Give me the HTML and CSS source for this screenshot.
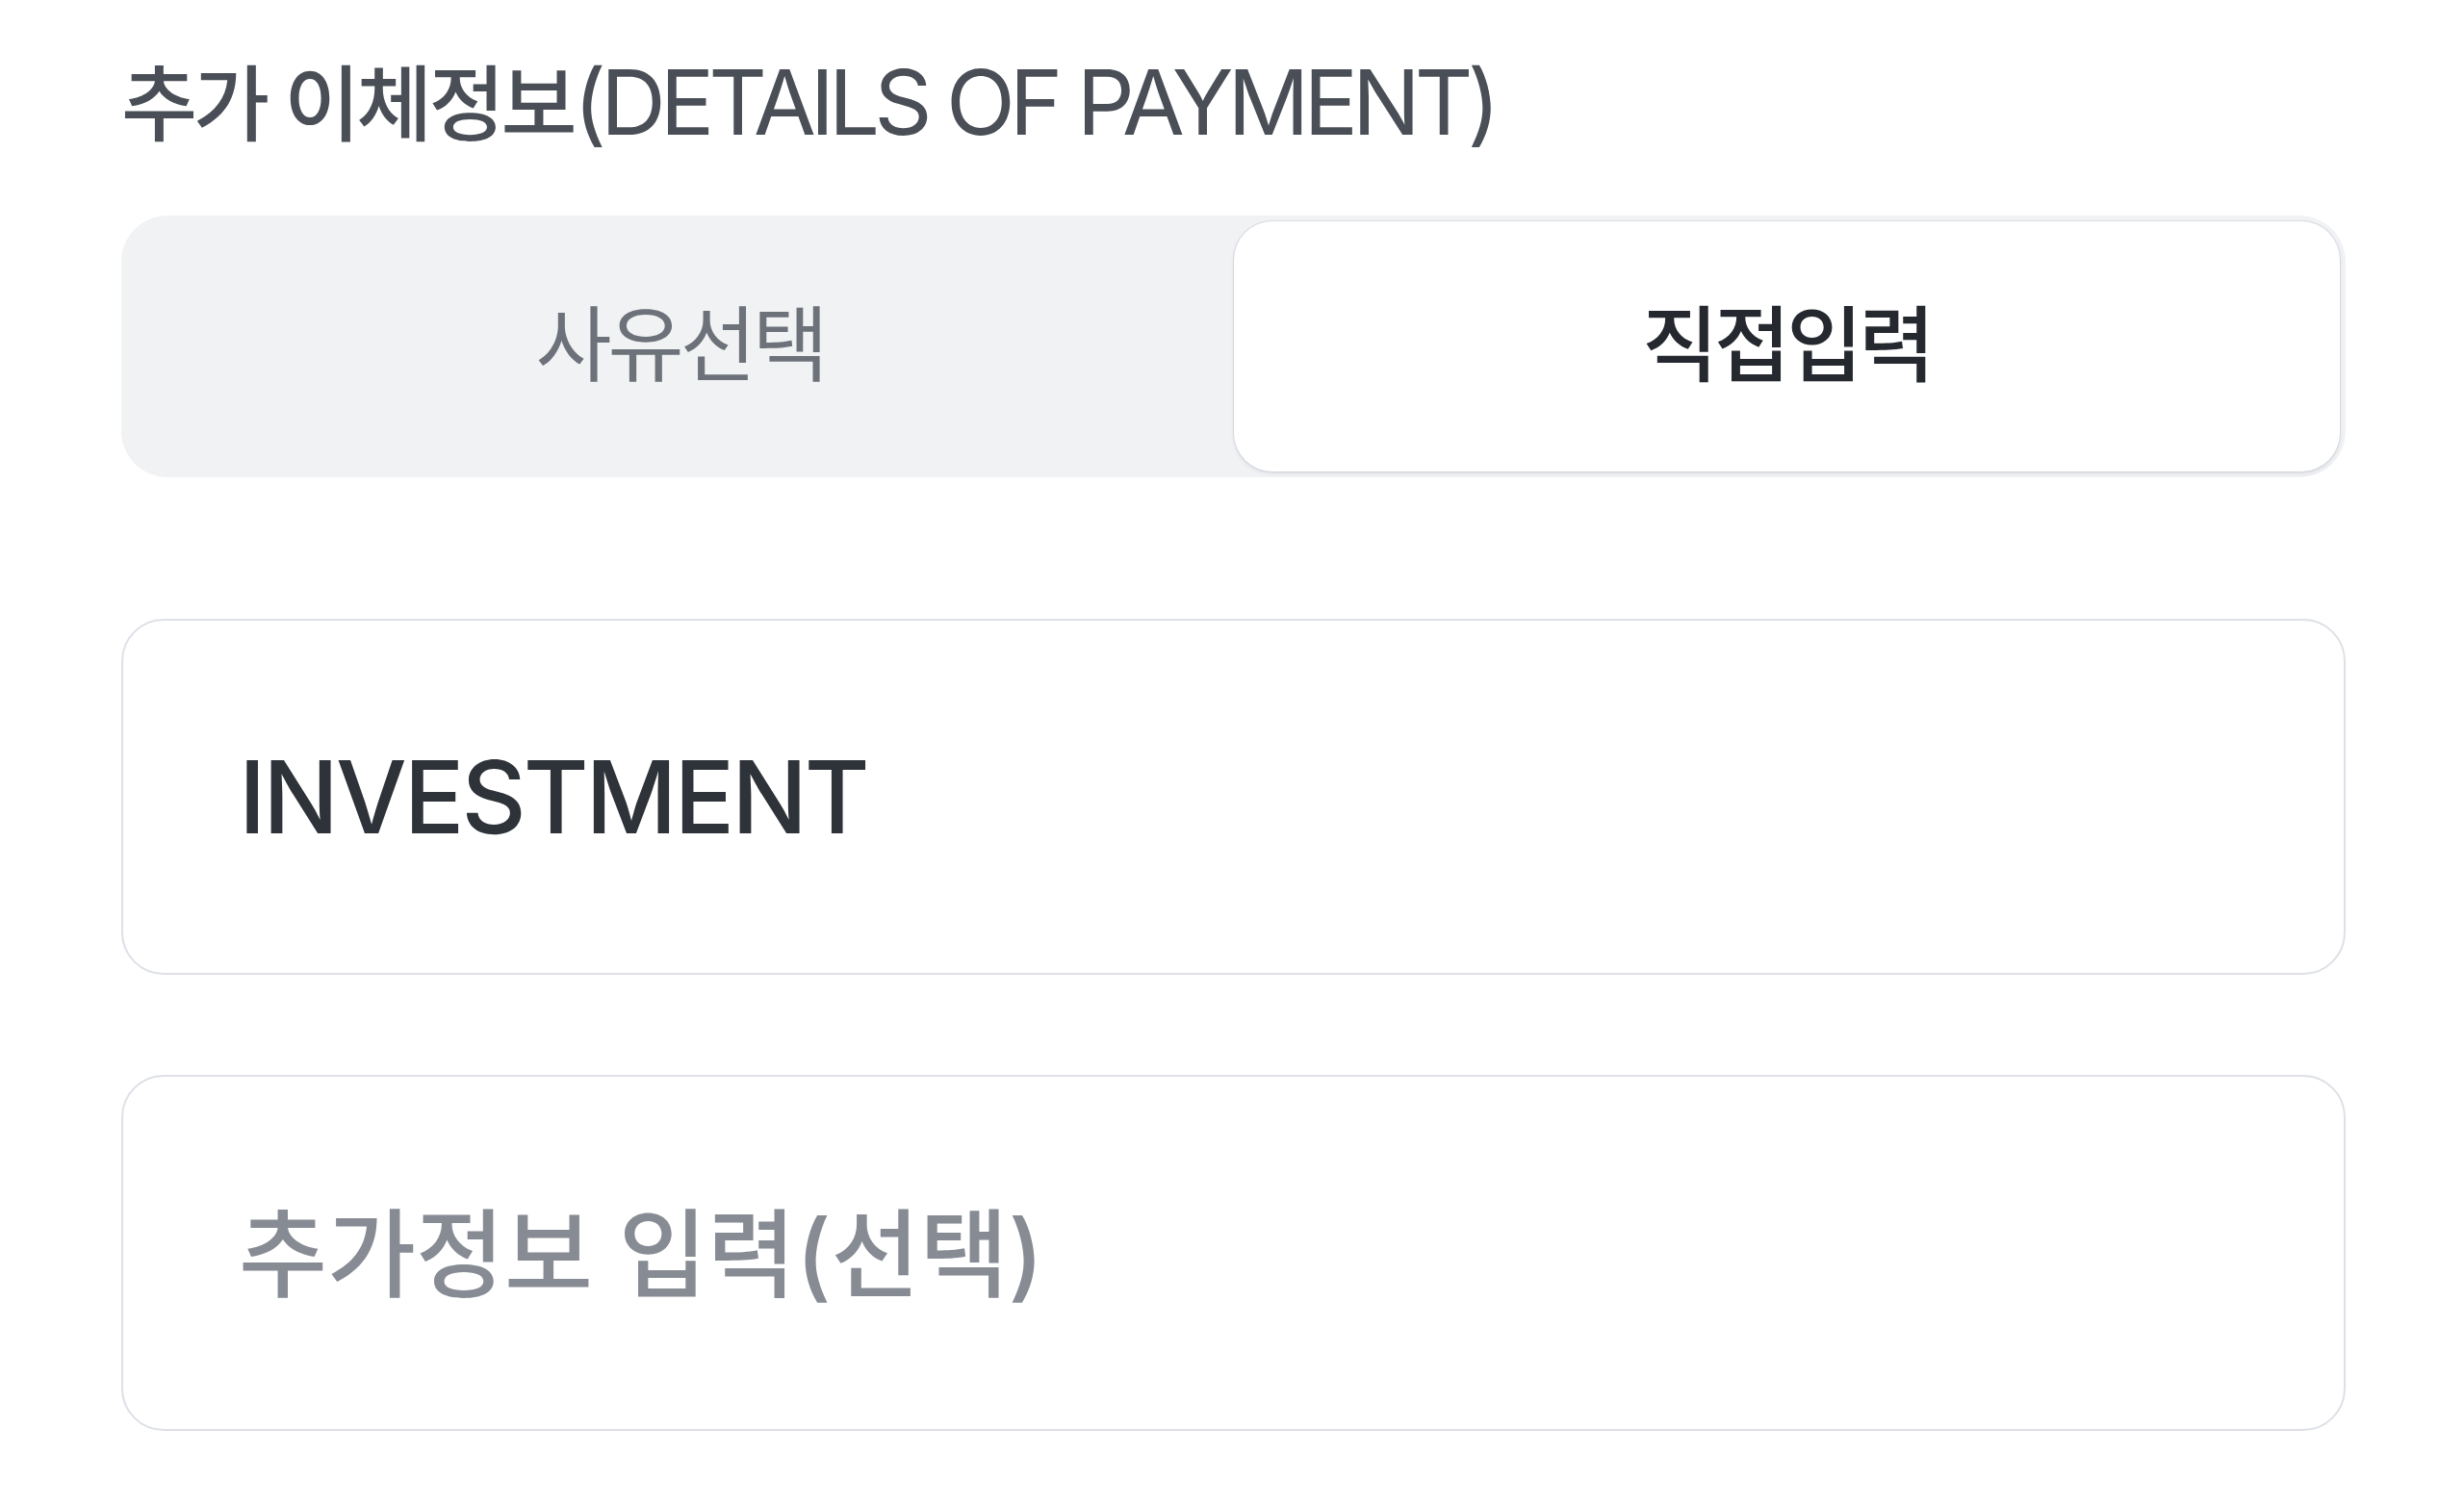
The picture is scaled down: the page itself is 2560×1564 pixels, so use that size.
FILE: index.html
```html
<!DOCTYPE html>
<html lang="ko">
<head>
<meta charset="utf-8">
<title>추가 이체정보</title>
<link rel="stylesheet" href="styles.css">
</head>
<body>
<main class="panel">
  <h2 class="title">추가 이체정보<span class="title-en">(DETAILS OF PAYMENT)</span></h2>
  <div class="segment" role="tablist">
    <button class="seg-btn" type="button" role="tab">사유선택</button>
    <button class="seg-btn is-active" type="button" role="tab" aria-selected="true">직접입력</button>
  </div>
  <div class="fields">
    <input class="field" type="text" value="INVESTMENT">
    <input class="field" type="text" placeholder="추가정보 입력(선택)">
  </div>
</main>
</body>
</html>
```
FILE: styles.css
```css
html, body {
  margin: 0;
  padding: 0;
  background: #ffffff;
}

body {
  font-family: "Inter", "Noto Sans CJK KR", sans-serif;
  color: #2e3239;
}

.panel {
  margin: 0 123px 0 126px;
  padding-top: 46px;
  display: flex;
  flex-direction: column;
}

.title {
  margin: 0;
  font-size: 86px;
  font-weight: 500;
  line-height: 120px;
  letter-spacing: -4px;
  color: #4a4f57;
  white-space: nowrap;
}

.title-en {
  font-size: 94px;
  font-weight: 400;
  letter-spacing: -6px;
}

.segment {
  margin-top: 55px;
  height: 272px;
  box-sizing: border-box;
  padding: 6px;
  background: #f1f2f4;
  border-radius: 48px;
  display: grid;
  grid-template-columns: 1fr 1fr;
}

.seg-btn {
  border: none;
  background: transparent;
  border-radius: 40px;
  font-family: "Inter", "Noto Sans CJK KR", sans-serif;
  font-size: 86px;
  font-weight: 400;
  letter-spacing: -4px;
  color: #6d727a;
  padding: 0 0 16px;
  cursor: pointer;
}

.seg-btn.is-active {
  background: #ffffff;
  color: #25292f;
  font-weight: 500;
  box-shadow: 0 0 0 1px rgba(190, 196, 208, 0.45), 0 2px 4px rgba(60, 70, 90, 0.12);
}

.fields {
  margin-top: 147px;
  display: flex;
  flex-direction: column;
  gap: 104px;
}

.field {
  box-sizing: border-box;
  width: 100%;
  height: 370px;
  margin: 0;
  padding: 0 60px 0 120px;
  border: 2px solid #dde0e6;
  border-radius: 44px;
  background: #ffffff;
  font-family: "Inter", "Noto Sans CJK KR", sans-serif;
  font-size: 104px;
  font-weight: 500;
  letter-spacing: -3px;
  color: #2e3239;
  outline: none;
}

.field::placeholder {
  font-size: 100px;
  font-weight: 500;
  letter-spacing: 0;
  color: #878c94;
  opacity: 1;
}
```
